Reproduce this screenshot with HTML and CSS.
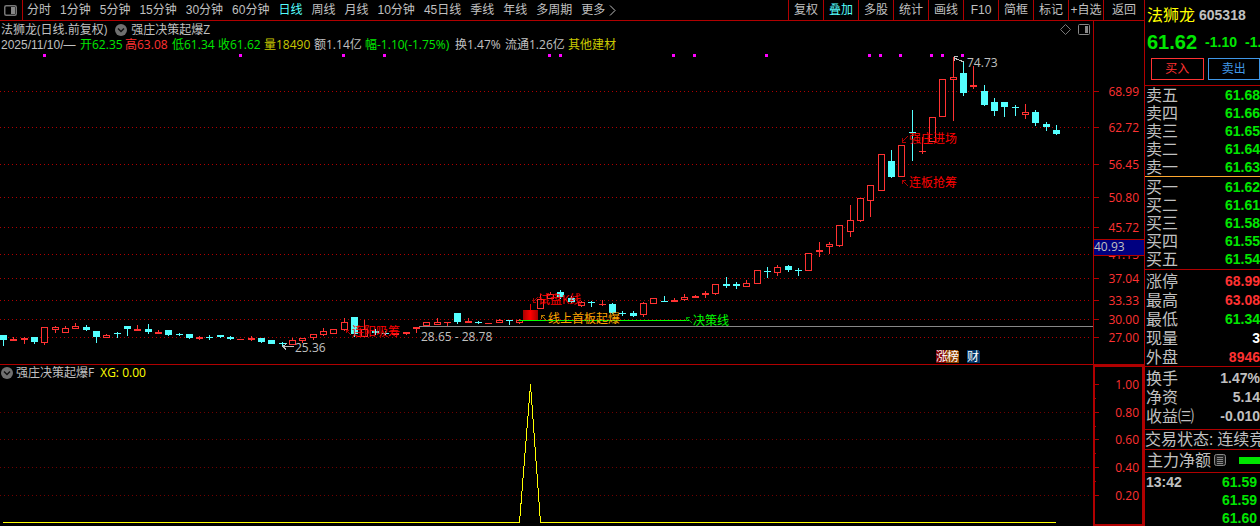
FILE: index.html
```
<!DOCTYPE html>
<html lang="zh-CN">
<head>
<meta charset="utf-8">
<title>法狮龙 605318</title>
<link rel="stylesheet" href="styles.css">
</head>
<body>
<div class="app">
  <main class="main">
    <nav class="toolbar">
      <button class="layout-btn" aria-label="布局"><svg class="icon" width="13" height="11" viewBox="0 0 13 11"><rect x=".75" y=".75" width="11.5" height="9.5" rx="1.5" fill="none" stroke="#777" stroke-width="1.5"/><rect x="7" y="2" width="4" height="7" fill="#888"/></svg></button>
      <div class="periods">
        <button>分时</button><button>1分钟</button><button>5分钟</button><button>15分钟</button><button>30分钟</button><button>60分钟</button><button class="on">日线</button><button>周线</button><button>月线</button><button>10分钟</button><button>45日线</button><button>季线</button><button>年线</button><button>多周期</button><button class="more">更多<svg class="icon" width="7" height="11" viewBox="0 0 7 11"><path d="M1 .5l5 5-5 5" fill="none" stroke="#c0c0c0"/></svg></button>
      </div>
      <div class="tools">
        <button>复权</button><button class="on">叠加</button><button>多股</button><button>统计</button><button>画线</button><button>F10</button><button>简框</button><button>标记</button><button>+自选</button><button>返回</button>
      </div>
    </nav>

    <header class="head">
      <div class="title">
        <span class="stock">法狮龙(日线.前复权)</span>
        <svg class="icon" width="12" height="12" viewBox="0 0 12 12"><circle cx="6" cy="6" r="6" fill="#707070"/><path d="M3 4.5l3 3 3-3" fill="none" stroke="#111" stroke-width="1.5"/></svg>
        <span>强庄决策起爆Z</span>
        <div class="corner">
          <svg class="icon" width="11" height="11" viewBox="0 0 11 11"><path d="M5.5.5l5 5-5 5-5-5z" fill="none" stroke="#777"/></svg>
          <svg class="icon" width="12" height="11" viewBox="0 0 12 11"><rect x=".5" y=".5" width="11" height="10" rx="1" fill="none" stroke="#888"/><rect x="7" y="2" width="3" height="7" fill="#888"/></svg>
        </div>
      </div>
      <div class="quote">
        <span class="date">2025/11/10/—</span><span class="green">开62.35</span><span class="red">高63.08</span><span class="green">低61.34</span><span class="green">收61.62</span><span class="gold">量18490</span><span>额1.14亿</span><span class="green">幅-1.10(-1.75%)</span><span>换1.47%</span><span>流通1.26亿</span><span class="gold">其他建材</span>
      </div>
    </header>

    <svg class="chart" viewBox="0 52 1144 312" role="img" aria-label="日线">
      <defs>
        <linearGradient id="hot"><stop offset="0" stop-color="#a00"/><stop offset=".5" stop-color="#f00"/><stop offset="1" stop-color="#a00"/></linearGradient>
      </defs>
      <g id="grid"></g>
      <path class="axis" d="M1093.5 52v312"/>
      <g id="dots"></g>
      <path class="cost" d="M419 326.5h674"/>
      <g id="candles"></g>
      <rect x="523" y="310" width="15" height="10" fill="url(#hot)"/>
      <path d="M530.5 304v7" stroke="#e00"/>
      <path d="M519 320.5h171" stroke="#0f0"/>
      <g class="prices" id="prices"></g>
      <rect x="1093.5" y="239.5" width="51" height="16" fill="#000080" stroke="#b00000"/>
      <g class="label">
        <text x="1094" y="251">40.93</text>
        <text x="967" y="67">74.73</text>
        <text x="295" y="352">25.36</text>
        <text x="421" y="341">28.65 - 28.78</text>
        <path class="arrow" d="M964 62l-10-4m4-2l-4 1v4M294 346.5h-11m4-3l-4 3 3 3"/>
      </g>
      <g class="signal">
        <path d="M346 330l5 5m-5-5v3m0-3h3M538 297l-5 5m0-4v4h3M908 136l-6 6m0-4v4h4M902 180l6 6m-6-6v4m0-4h4"/>
        <text x="352" y="336">连阳吸筹</text>
        <text x="538" y="304">试盘K线</text>
        <text x="909" y="143">强庄进场</text>
        <text x="909" y="187">连板抢筹</text>
      </g>
      <path d="M541 315l6 6m-6-6v4m0-4h4" stroke="#b07800" fill="none"/>
      <text class="orange" x="548" y="323">线上首板起爆</text>
      <path d="M686 317l6 6m-6-6v4m0-4h4" stroke="#00a000" fill="none"/>
      <text class="lime" x="693" y="325">决策线</text>
      <path fill="#800000" d="M936 350h10v13h-10z"/>
      <path fill="#904000" d="M946 350h11l2 2v11h-13z"/>
      <path fill="#003468" d="M967 350h11l2 2v11h-13z"/>
      <g class="badge"><text x="936" y="361">涨</text><text x="947" y="361">榜</text><text x="967" y="361">财</text></g>
    </svg>

    <section class="lower">
      <div class="indicator">
        <div class="title">
          <svg class="icon" width="12" height="12" viewBox="0 0 12 12"><circle cx="6" cy="6" r="6" fill="#707070"/><path d="M3 4.5l3 3 3-3" fill="none" stroke="#111" stroke-width="1.5"/></svg>
          <span>强庄决策起爆F</span><span class="yellow">XG: 0.00</span>
        </div>
        <svg class="chart" viewBox="0 381 1093 145" role="img" aria-label="XG">
          <g id="grid2"></g>
          <path d="M3 522.5H519.5L530.5 384.5L540.5 522.5H1056" fill="none" stroke="#ff0"/>
        </svg>
      </div>
      <div class="scale">
        <svg class="chart" viewBox="1095 367 47 157" role="img" aria-label="刻度">
          <path class="axis" d="M1095 384.5h4m-4 28h4m-4 27h4m-4 28h4m-4 28h4M1095 398.5h1m-1 28h1m-1 27h1m-1 28h1"/>
          <g class="prices"><text x="1139" y="389">1.00</text><text x="1139" y="417">0.80</text><text x="1139" y="444">0.60</text><text x="1139" y="472">0.40</text><text x="1139" y="500">0.20</text></g>
        </svg>
      </div>
    </section>
  </main>

  <aside class="panel">
    <div class="top">
      <div class="name"><span class="yellow">法狮龙</span><b>605318</b></div>
      <div class="last"><b class="big">61.62</b><b>-1.10</b><b>-1.75%</b></div>
      <div class="trade"><button class="buy">买入</button><button class="sell">卖出</button></div>
    </div>
    <dl class="rows green">
      <div><dt>卖五</dt><dd>61.68</dd></div><div><dt>卖四</dt><dd>61.66</dd></div><div><dt>卖三</dt><dd>61.65</dd></div><div><dt>卖二</dt><dd>61.64</dd></div><div><dt>卖一</dt><dd>61.63</dd></div>
    </dl>
    <dl class="rows green bids">
      <div><dt>买一</dt><dd>61.62</dd></div><div><dt>买二</dt><dd>61.61</dd></div><div><dt>买三</dt><dd>61.58</dd></div><div><dt>买四</dt><dd>61.55</dd></div><div><dt>买五</dt><dd>61.54</dd></div>
    </dl>
    <dl class="rows tall stats">
      <div><dt>涨停</dt><dd class="red">68.99</dd></div><div><dt>最高</dt><dd class="red">63.08</dd></div><div><dt>最低</dt><dd class="green">61.34</dd></div><div><dt>现量</dt><dd class="white">3</dd></div><div><dt>外盘</dt><dd class="red">8946</dd></div>
    </dl>
    <dl class="rows tall ratios">
      <div><dt>换手</dt><dd>1.47%</dd></div><div><dt>净资</dt><dd>5.14</dd></div><div><dt>收益㈢</dt><dd>-0.010</dd></div>
    </dl>
    <div class="state">交易状态: 连续竞价</div>
    <div class="flow"><span>主力净额</span><svg class="icon" width="12" height="12" viewBox="0 0 12 12"><rect x=".5" y=".5" width="11" height="11" rx="2" fill="#222" stroke="#888"/><path d="M3 3.5h6M3 5.5h6M3 7.5h6M3 9.5h6" stroke="#888"/></svg><i class="bar"></i></div>
    <dl class="rows ticks green">
      <div><dt>13:42</dt><dd>61.59</dd></div><div><dt></dt><dd>61.59</dd></div><div><dt></dt><dd>61.60</dd></div>
    </dl>
  </aside>
</div>
<script src="chart.js"></script>
</body>
</html>
```
FILE: styles.css
```
* { box-sizing: border-box; }
body {
  margin: 0;
  background: #000;
  color: #c0c0c0;
  font: 12px/16px "Open Sans", "Noto Sans CJK SC", sans-serif;
  overflow: hidden;
}
button {
  padding: 0;
  border: 0;
  background: none;
  color: inherit;
  font: inherit;
  white-space: nowrap;
}
.icon { display: block; flex: none; }
.app { display: flex; min-height: 100vh; }
.main { flex: 1; min-width: 0; }
.green { color: #00e600; }
.red { color: #ff3232; }
.gold { color: #c8c800; }
.yellow { color: #ff0; }
.white { color: #fff; }
.on { color: #54ffff; }

.toolbar {
  display: flex;
  height: 21px;
  border-bottom: 1px solid #b00000;
  font-family: "Liberation Sans", "Noto Sans CJK SC", sans-serif;
}
.layout-btn {
  width: 23px;
  padding-left: 4px;
  border-right: 1px solid #b00000;
}
.periods { display: flex; flex: 1; gap: 9px; padding-left: 4px; }
.more { display: flex; align-items: center; gap: 4px; }
.tools { display: grid; grid-template-columns: repeat(9, 35px) 41px; }
.tools button { border-left: 1px solid #b00000; }

.head {
  margin-right: 50px;
  border-right: 1px solid #b00000;
  white-space: nowrap;
}
.title { display: flex; align-items: center; gap: 4px; height: 17px; padding-left: 1px; }
.stock { padding-right: 4px; }
.corner { display: flex; gap: 7px; margin-left: auto; padding-right: 3px; }
.quote {
  display: grid;
  grid-template-columns: 79px 45px 47px 46px 46px 50px 51px 90px 50px 63px auto;
  height: 14px;
  padding-left: 1px;
  line-height: 14px;
}
.date { font-family: "Liberation Sans", "Noto Sans CJK SC", sans-serif; }

.chart { display: block; width: 100%; height: auto; shape-rendering: crispEdges; }
.axis { fill: none; stroke: #b00000; }
.grid { stroke: #b00000; stroke-dasharray: 1 3; }
.grid-dim { stroke: #700000; stroke-dasharray: 1 3; }
.cost { stroke: #888; }
.prices { fill: #ff3232; text-anchor: end; }
.label { fill: #c0c0c0; }
.arrow { fill: none; stroke: #c0c0c0; }
.signal { fill: #f00; }
.signal path { fill: none; stroke: #b00000; }
.orange { fill: #ffa500; }
.lime { fill: #0f0; }
.badge { fill: #fff; }

.lower { display: flex; border-top: 1px solid #b00000; }
.indicator { flex: 1; min-width: 0; }
.indicator .title { gap: 3px; height: 16px; }
.indicator .yellow { padding-left: 3px; }
.scale { width: 51px; border: 2px solid #b00000; }

.panel {
  width: 116px;
  border-left: 1px solid #b00000;
  overflow: hidden;
  font-size: 16px;
  line-height: 18px;
  white-space: nowrap;
}
.panel b, .panel dd { font: bold 14px/18px "Liberation Sans", sans-serif; }
.top { height: 85px; }
.name { display: flex; align-items: center; gap: 4px; height: 30px; padding-left: 2px; }
.last { display: flex; align-items: center; gap: 8px; height: 24px; padding-left: 2px; color: #00e600; }
.panel .big { font-size: 20px; }
.trade { display: grid; grid-template-columns: 1fr 1fr; gap: 4px; margin-top: 4px; padding-left: 6px; }
.trade button { height: 22px; border: 1px solid; font-size: 12px; line-height: 16px; }
.buy { color: #ff3232; }
.sell { color: #4098e8; }
.rows { margin: 0; border-top: 1px solid #b00000; }
.rows div { display: flex; align-items: center; justify-content: space-between; height: 18px; padding-left: 1px; }
.rows dt { color: #c0c0c0; }
.rows dd { margin: 0; }
.rows.tall div { height: 19px; }
.bids { padding: 1px 0; border-color: #ffa830; }
.stats { padding-top: 1px; }
.ratios { padding: 1px 0 4px; }
.state { height: 20px; border-top: 1px solid #b00000; }
.flow { display: flex; align-items: center; gap: 3px; height: 23px; padding: 0 0 2px 2px; border-top: 1px solid #b00000; }
.bar { flex: 1; height: 7px; margin-left: 10px; background: #00e600; }
.ticks dt { font: bold 14px/18px "Liberation Sans", sans-serif; }
.ticks div { padding-right: 3px; }
```
FILE: chart.js
```
const NS = "http://www.w3.org/2000/svg";
function add(parent, tag, attrs, text) {
  const el = document.createElementNS(NS, tag);
  for (const k in attrs) el.setAttribute(k, attrs[k]);
  if (text) el.textContent = text;
  parent.appendChild(el);
}
const $ = id => document.getElementById(id);

const levels = [[91, "68.99"], [127, "62.72"], [164, "56.45"], [197, "50.80"], [227, "45.72"],
  [254, "41.15"], [278, "37.04"], [300, "33.33"], [319, "30.00"], [337, "27.00"]];
for (const [y, t] of levels) {
  add($("grid"), "path", { class: "grid", d: `M0 ${y + .5}H1092` });
  add($("grid"), "path", { class: "axis", d: `M1094 ${y + .5}h5` });
  add($("prices"), "text", { x: 1139, y: y + 5 }, t);
}
for (const y of [412, 439, 467, 495]) add($("grid2"), "path", { class: "grid-dim", d: `M0 ${y + .5}H1092` });

for (const x of [44, 240, 343, 384, 549, 560, 673, 694, 766, 869, 880, 900, 931, 942, 962])
  add($("dots"), "rect", { x: x - 1, y: 54, width: 3, height: 3, fill: "#f0f" });

// up/down, high, body top, body bottom, low
const bars = `c 335 335 340 346,r 337 339 341 341,r 337 338 340 344,c 337 337 342 344,r 327 327 343 345,
r 326 327 330 333,r 326 328 333 333,r 323 326 329 329,c 325 327 330 331,c 331 331 337 343,
r 334 335 338 338,c 332 333 334 338,c 326 326 329 336,r 325 329 331 331,c 324 329 332 334,
r 330 332 334 334,c 330 330 335 336,c 333 334 335 336,c 334 334 338 339,r 336 337 339 340,
c 335 337 338 340,c 335 335 337 338,c 336 337 339 340,r 339 339 340 340,r 336 338 340 341,
c 338 338 342 343,c 340 340 344 344,c 342 343 344 346,r 338 340 345 345,r 338 338 341 343,
r 334 334 338 340,r 328 331 335 336,r 329 329 334 334,r 318 322 330 331,c 317 317 334 337,
r 320 329 337 337,c 329 331 333 335,c 331 333 334 335,r 333 333 335 335,r 332 332 334 335,
r 327 327 329 333,r 322 322 326 326,r 318 322 325 325,r 322 322 323 326,c 313 313 322 324,
r 318 321 323 323,c 321 322 323 324,r 323 323 324 324,r 319 320 323 323,c 320 320 321 325,
r 319 320 323 324,r 304 310 320 320,r 294 299 309 309,r 292 294 299 299,c 290 292 297 299,
c 296 298 302 303,r 301 302 306 307,c 301 302 303 307,r 300 304 305 306,c 303 304 313 314,
c 311 313 314 316,c 311 313 316 317,r 302 303 315 317,r 298 298 304 304,c 296 301 302 302,
r 298 300 302 302,r 294 297 300 301,r 295 296 298 298,r 291 293 295 298,r 284 284 294 295,
c 277 284 286 288,c 282 284 286 289,r 280 283 287 287,r 270 270 284 284,c 267 271 272 278,
r 265 267 273 276,c 265 266 270 272,c 268 270 271 276,r 253 253 271 271,r 242 250 252 257,
r 242 244 247 254,r 225 225 246 247,r 205 220 232 237,r 198 198 221 222,r 185 185 201 217,
r 154 154 191 191,c 150 161 177 178,r 145 145 177 177,c 110 132 133 161,r 137 151 152 154,
r 117 117 142 142,r 79 79 117 117,r 57 77 80 121,c 61 73 93 96,r 66 85 87 89,
c 85 91 105 106,c 98 102 111 116,c 102 102 107 117,c 105 107 108 116,r 104 112 115 119,
c 110 112 123 126,c 122 124 127 131,c 125 130 134 135`.split(",");
bars.forEach((row, i) => {
  const [kind, ...v] = row.trim().split(" ");
  const [hi, top, bot, lo] = v.map(Number);
  const x = 3 + Math.round(i * 10.324);
  const color = kind === "r" ? "#ff3232" : "#54ffff";
  if (lo > hi) add($("candles"), "rect", { x, y: hi, width: 1, height: lo - hi, fill: color });
  if (kind === "r" && bot - top > 2)
    add($("candles"), "rect", { x: x - 2.5, y: top + .5, width: 6, height: bot - top - 1, fill: "#000", stroke: color });
  else
    add($("candles"), "rect", { x: x - 3, y: top, width: 7, height: bot - top, fill: color });
});
```
